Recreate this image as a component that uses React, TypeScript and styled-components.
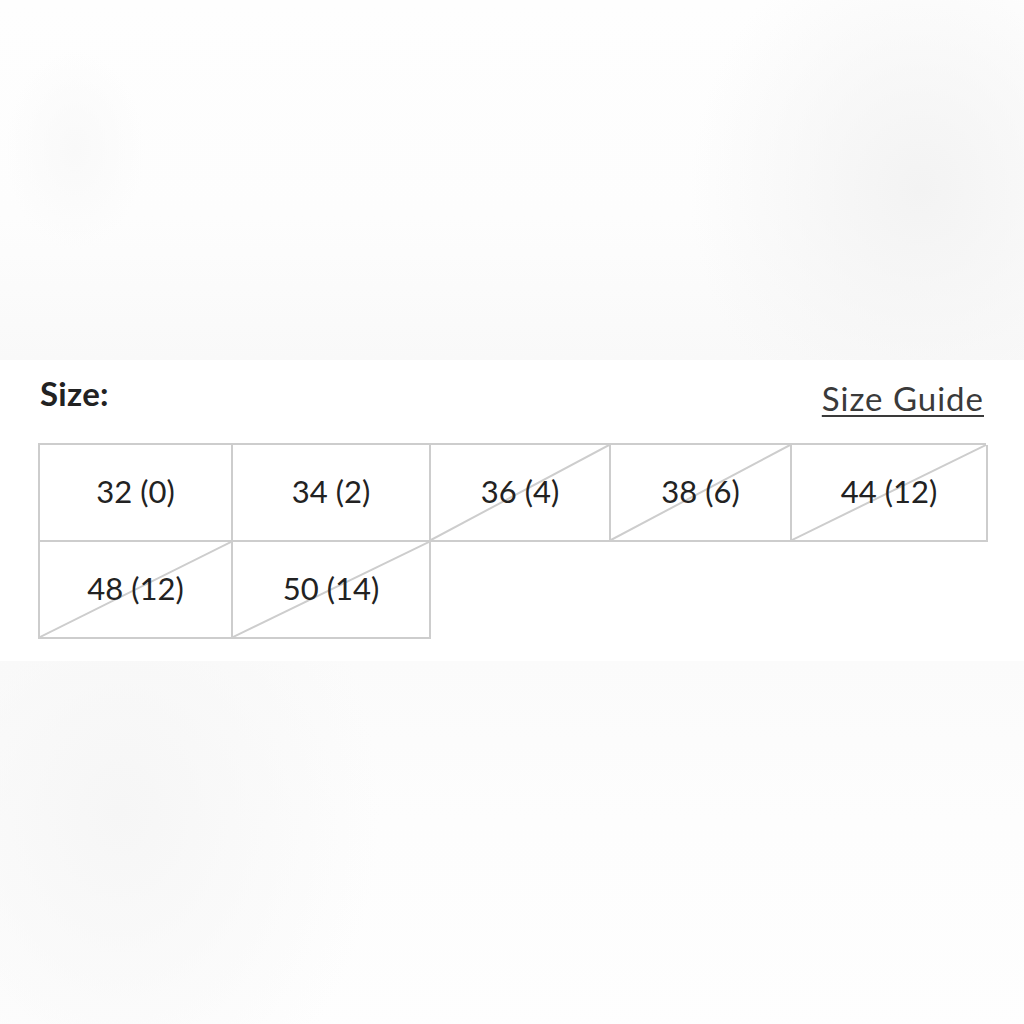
import * as React from 'react';
import styled, { createGlobalStyle } from 'styled-components';

const GlobalStyle = createGlobalStyle`
  html, body {
    margin: 0;
    padding: 0;
  }
  body {
    width: 1024px;
    height: 1024px;
    overflow: hidden;
    background: #fdfdfd;
    font-family: 'Lato', 'Noto Sans', sans-serif;
    color: #222;
  }
`;

const Page = styled.div`
  display: flex;
  flex-direction: column;
  width: 1024px;
  height: 1024px;
`;

const Backdrop = styled.div<{ $h: number; $bg: string }>`
  height: ${(p) => p.$h}px;
  flex-shrink: 0;
  background: ${(p) => p.$bg};
`;

const Panel = styled.section`
  background: #fff;
  padding: 14px 38px 22px 38px;
  display: flex;
  flex-direction: column;
  gap: 26px;
`;

const HeaderRow = styled.div`
  display: flex;
  justify-content: space-between;
  align-items: flex-start;
  padding: 0 2px;
`;

const Label = styled.div`
  font-size: 33px;
  font-weight: 700;
  color: #222;
  letter-spacing: 0.3px;
  line-height: 38px;
`;

const GuideLink = styled.a`
  font-size: 33px;
  color: #3a3a3a;
  text-decoration: underline;
  text-decoration-thickness: 2px;
  text-underline-offset: 4px;
  line-height: 38px;
  margin-top: 5px;
  letter-spacing: 1px;
  cursor: pointer;
`;

const Grid = styled.div`
  display: grid;
  grid-template-columns: 193px 198px 180px 181px 196px;
  grid-auto-rows: 97px;
  border-top: 2px solid #cdcdcd;
  border-left: 2px solid #cdcdcd;
  width: 948px;
  box-sizing: border-box;
`;

const Cell = styled.button<{ $out: boolean }>`
  position: relative;
  border: none;
  border-right: 2px solid #cdcdcd;
  border-bottom: 2px solid #cdcdcd;
  background: #fff;
  padding: 0 0 4px 0;
  display: flex;
  align-items: center;
  justify-content: center;
  font-family: 'Lato', 'Noto Sans', sans-serif;
  font-size: 31px;
  color: #222;
  cursor: ${(p) => (p.$out ? 'default' : 'pointer')};
`;

const Strike = styled.svg`
  position: absolute;
  inset: 0;
  width: 100%;
  height: 100%;
  pointer-events: none;
`;

const Value = styled.span`
  position: relative;
`;

const sizes = [
  { label: '32 (0)', out: false },
  { label: '34 (2)', out: false },
  { label: '36 (4)', out: true },
  { label: '38 (6)', out: true },
  { label: '44 (12)', out: true },
  { label: '48 (12)', out: true },
  { label: '50 (14)', out: true },
];

const topBg = `
  radial-gradient(ellipse 70px 100px at 75px 150px, #f9f9f9 0%, rgba(249,249,249,0) 100%),
  radial-gradient(ellipse 230px 260px at 920px 190px, #f3f3f3 0%, rgba(244,244,244,0) 100%),
  linear-gradient(180deg, #fefefe 0%, #fdfdfd 60%, #f9f9f9 100%)
`;

const bottomBg = `
  radial-gradient(ellipse 260px 330px at 120px 150px, #f6f6f6 0%, rgba(247,247,247,0) 100%),
  linear-gradient(180deg, #fbfbfb 0%, #fdfdfd 40%, #fefefe 100%)
`;

export default function App() {
  return (
    <Page>
      <GlobalStyle />
      <Backdrop $h={360} $bg={topBg} />
      <Panel>
        <HeaderRow>
          <Label>Size:</Label>
          <GuideLink>Size Guide</GuideLink>
        </HeaderRow>
        <Grid>
          {sizes.map((s) => (
            <Cell key={s.label} $out={s.out}>
              {s.out && (
                <Strike viewBox="0 0 100 100" preserveAspectRatio="none">
                  <line
                    x1="0"
                    y1="100"
                    x2="100"
                    y2="0"
                    stroke="#cdcdcd"
                    strokeWidth="2"
                    vectorEffect="non-scaling-stroke"
                  />
                </Strike>
              )}
              <Value>{s.label}</Value>
            </Cell>
          ))}
        </Grid>
      </Panel>
      <Backdrop $h={400} $bg={bottomBg} />
    </Page>
  );
}
